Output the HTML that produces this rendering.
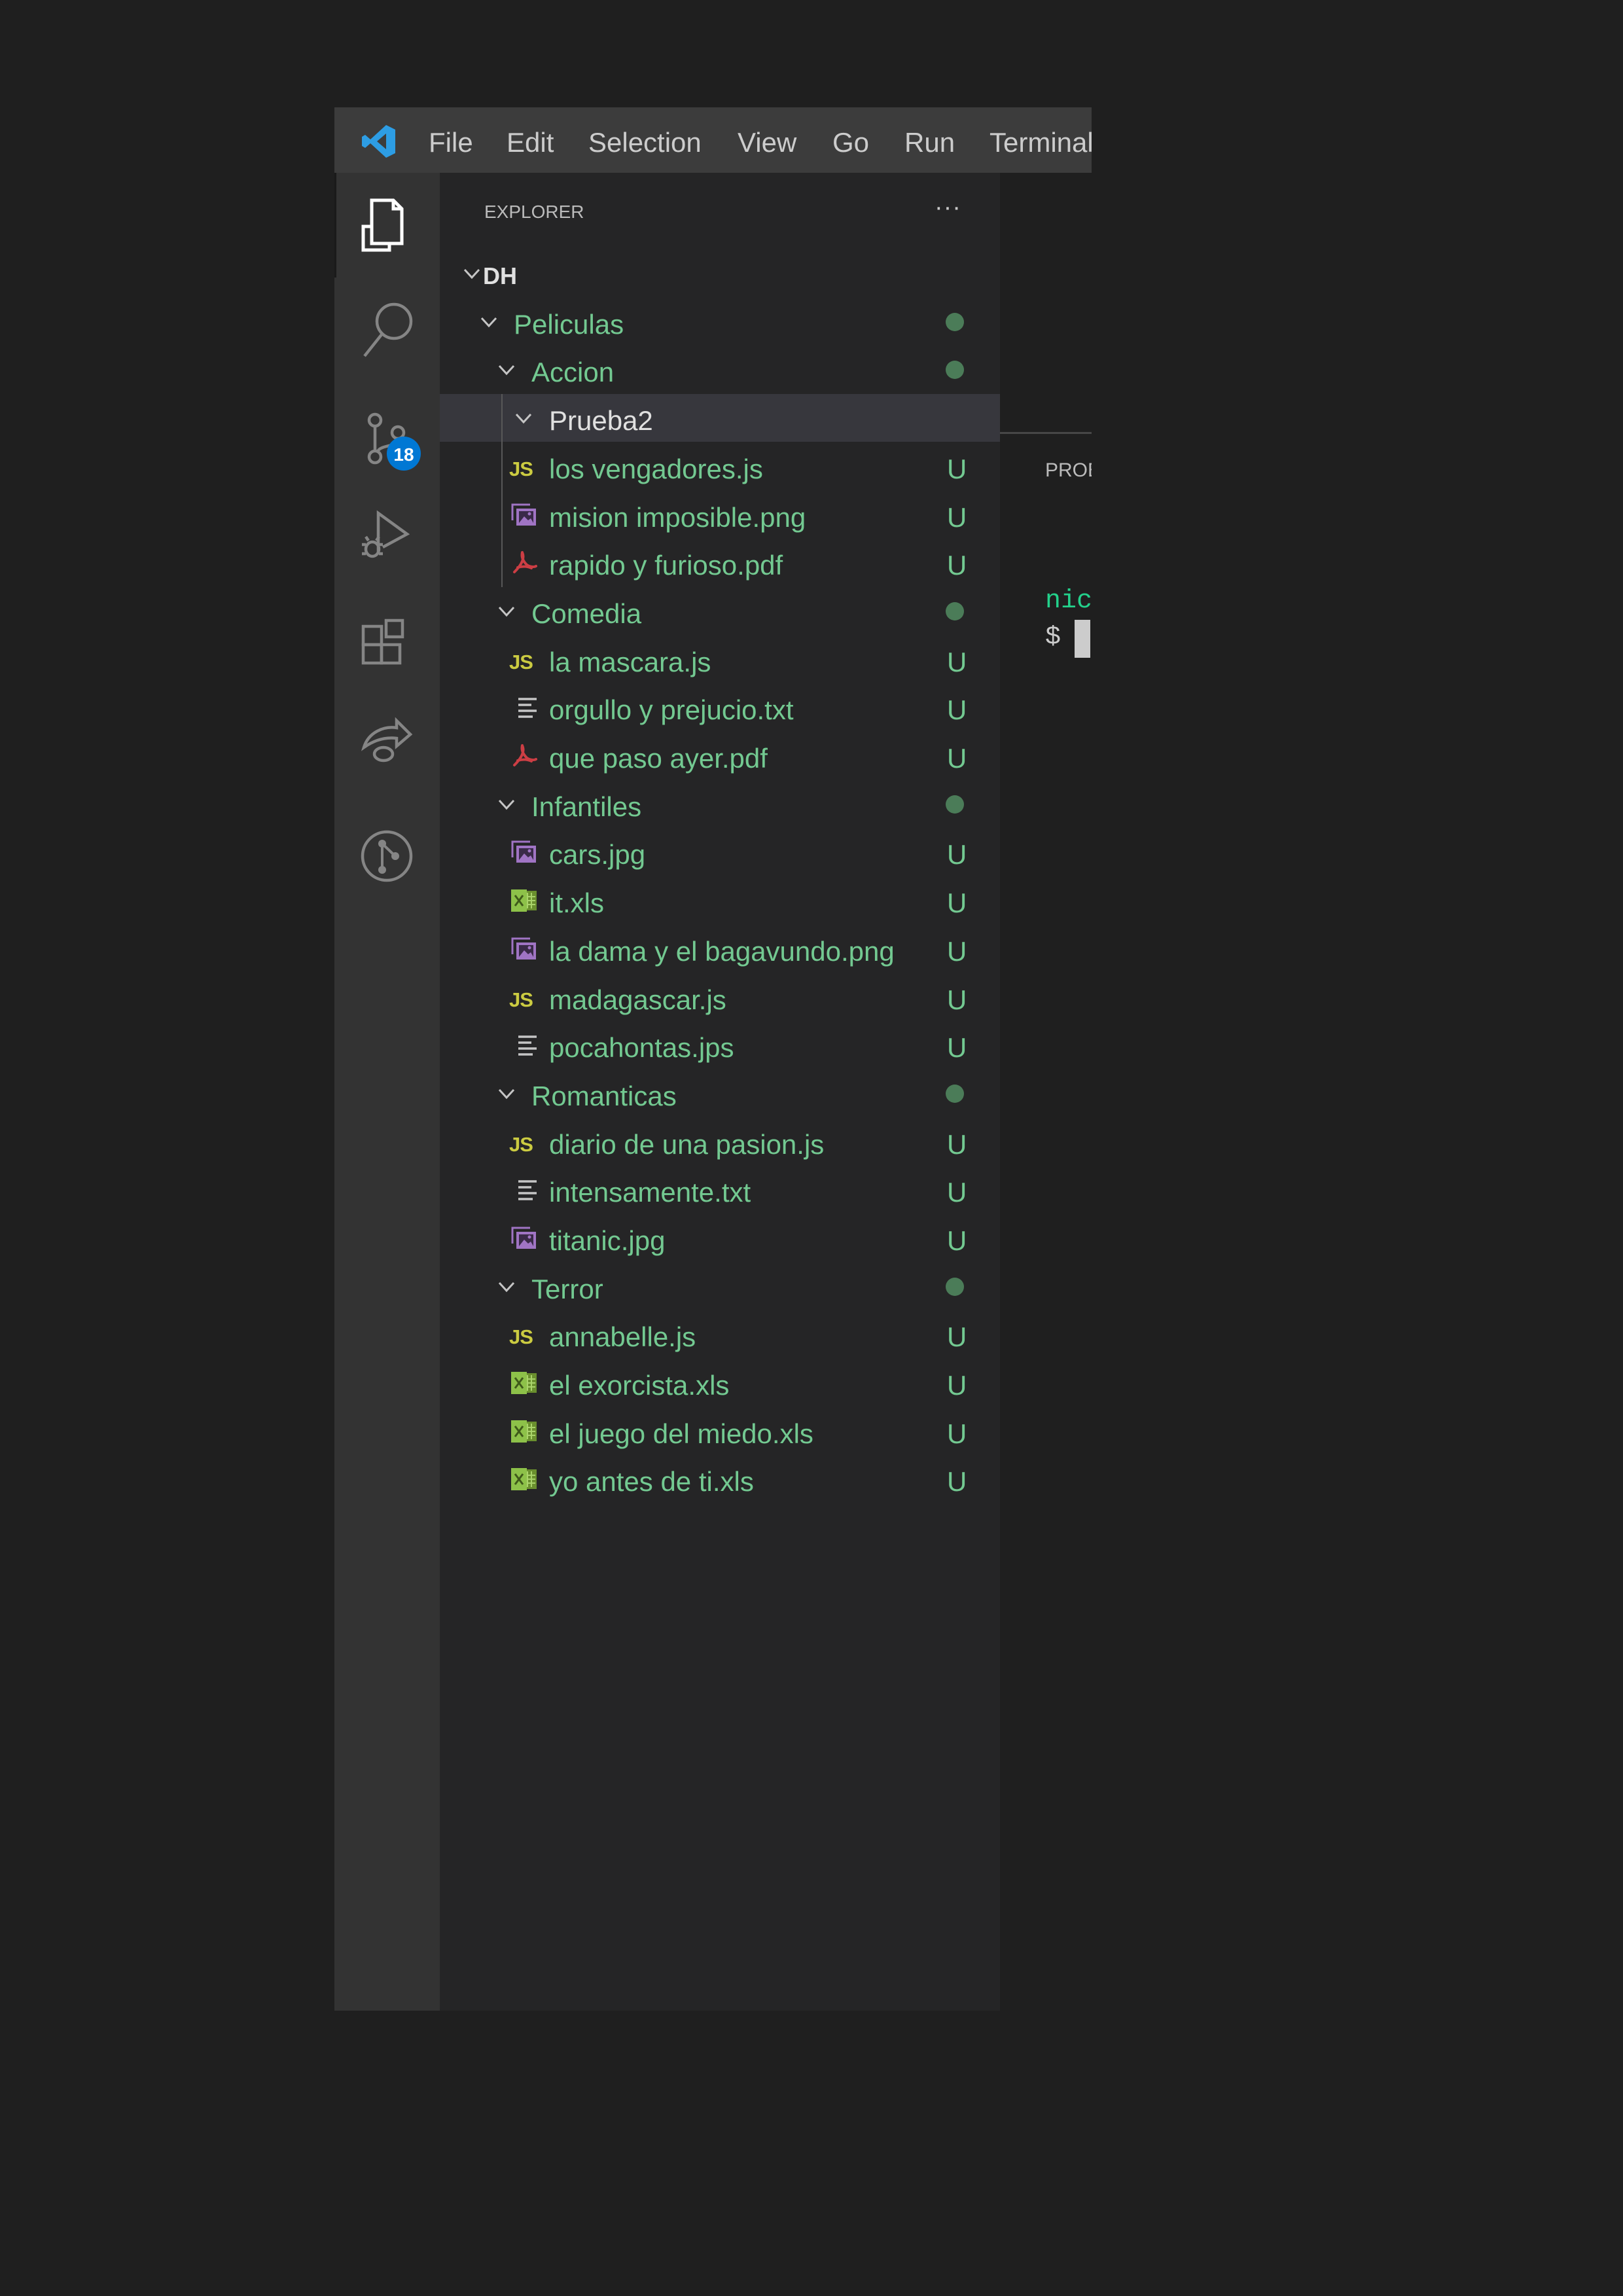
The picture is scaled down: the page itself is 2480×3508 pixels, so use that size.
<!DOCTYPE html>
<html><head><meta charset="utf-8"><style>
body{margin:0;width:2480px;height:3508px;background:#1f1f1f;position:relative;overflow:hidden;font-family:"Liberation Sans",sans-serif}
.a{position:absolute}
.r{position:absolute;left:672px;width:856px;height:74px;line-height:82px;font-size:42px;color:#73c991;white-space:nowrap}
.r span{position:absolute}
.u{left:775px}
.dot{position:absolute;left:773px;top:23px;width:28px;height:28px;border-radius:50%;background:#4b7c58}
.ch{position:absolute;top:24px;width:28px;height:26px}
.ic{position:absolute;left:106px;top:15px;width:46px;height:44px}
.js{position:absolute;left:106px;font-weight:bold;font-size:31px;color:#cbcb41;letter-spacing:-1px}
</style></head><body>
<svg width="0" height="0" style="position:absolute">
<defs>
<symbol id="chev" viewBox="0 0 28 26"><polyline points="3,7 14,19 25,7" fill="none" stroke="#c5c5c5" stroke-width="3"/></symbol>
<symbol id="img" viewBox="0 0 46 44"><path d="M5 30V6H32" fill="none" stroke="#a074c4" stroke-width="3"/><rect x="11" y="12" width="30" height="26" fill="#a074c4"/><rect x="15" y="16" width="22" height="18" fill="#3a2a48"/><path d="M15 34L23 24L29 30L33 27L37 34Z" fill="#a074c4"/><circle cx="31" cy="20" r="2.5" fill="#a074c4"/></symbol>
<symbol id="pdf" viewBox="0 0 46 44"><path d="M20 6C18 14 22 20 27 25C31 28 38 29 41 27M20 6C24 14 20 24 8 36M13 29C20 27 28 27 34 30" fill="none" stroke="#cc3e44" stroke-width="4" stroke-linecap="round"/></symbol>
<symbol id="txt" viewBox="0 0 46 44"><g stroke="#c5c5c5" stroke-width="3.5"><line x1="14" y1="9" x2="42" y2="9"/><line x1="14" y1="18" x2="34" y2="18"/><line x1="14" y1="27" x2="42" y2="27"/><line x1="14" y1="36" x2="36" y2="36"/></g></symbol>
<symbol id="xls" viewBox="0 0 46 44"><rect x="18" y="7" width="24" height="30" fill="#6a8f2e"/><g stroke="#a9d36a" stroke-width="2"><line x1="28" y1="10" x2="28" y2="34"/><line x1="34" y1="10" x2="34" y2="34"/><line x1="24" y1="16" x2="40" y2="16"/><line x1="24" y1="22" x2="40" y2="22"/><line x1="24" y1="28" x2="40" y2="28"/></g><rect x="3" y="5" width="24" height="34" fill="#8dc149"/><path d="M9 14L21 30M21 14L9 30" stroke="#3f5a1a" stroke-width="3"/></symbol>
</defs></svg>

<div class="a" style="left:511px;top:164px;width:1157px;height:100px;background:#3c3c3c;overflow:hidden">
<svg class="a" style="left:41px;top:25px" width="54" height="54" viewBox="0 0 54 54"><path d="M38 2L52 9V45L38 52L14 30L6 37L1 34V20L6 17L14 24Z M38 15L24 27L38 39Z" fill="#2d9de4" fill-rule="evenodd"/></svg>
<div class="a" style="top:30px;left:144px;font-size:42px;color:#cccccc;white-space:nowrap">File</div>
<div class="a" style="top:30px;left:263px;font-size:42px;color:#cccccc">Edit</div>
<div class="a" style="top:30px;left:388px;font-size:42px;color:#cccccc">Selection</div>
<div class="a" style="top:30px;left:616px;font-size:42px;color:#cccccc">View</div>
<div class="a" style="top:30px;left:761px;font-size:42px;color:#cccccc">Go</div>
<div class="a" style="top:30px;left:871px;font-size:42px;color:#cccccc">Run</div>
<div class="a" style="top:30px;left:1001px;font-size:42px;color:#cccccc;white-space:nowrap">Terminal</div>
</div>

<div class="a" style="left:511px;top:264px;width:161px;height:2808px;background:#333333"></div>
<div class="a" style="left:511px;top:264px;width:3px;height:160px;background:#1a1a1a"></div>
<svg class="a" style="left:511px;top:264px" width="161" height="1150" viewBox="0 0 161 1150">
<g fill="none" stroke="#ffffff" stroke-width="5">
<path d="M57 82H44V118H84V108"/><path d="M57 108V42H90L103 55V108Z"/><path d="M90 42V55H103"/>
</g>
<g fill="none" stroke="#858585" stroke-width="4.5">
<circle cx="91" cy="227" r="26"/><line x1="73" y1="246" x2="46" y2="280"/>
<circle cx="62" cy="378" r="9"/><circle cx="97" cy="397" r="9"/><circle cx="62" cy="434" r="9"/>
<line x1="62" y1="387" x2="62" y2="425"/><path d="M97 406C97 420 70 415 66 426"/>
<path d="M67 580V520L111 552L74 572"/><ellipse cx="58" cy="575" rx="10" ry="11"/><path d="M42 568H48M42 582H48M68 568H74M68 582H74M52 562L48 556M64 562L68 556"/>
<rect x="44" y="693" width="28" height="28"/><rect x="44" y="721" width="28" height="28"/><rect x="72" y="721" width="28" height="28"/><rect x="79" y="684" width="25" height="25"/>
<path d="M45 878C52 855 75 845 95 848V837L116 858L95 876V864C78 862 62 866 45 878Z"/><ellipse cx="75" cy="888" rx="14" ry="10"/>
<circle cx="80" cy="1044" r="37"/>
</g>
<g fill="#858585"><circle cx="73" cy="1025" r="6"/><circle cx="93" cy="1044" r="6"/><circle cx="73" cy="1065" r="6"/></g>
<path d="M73 1025V1065M73 1025L93 1044" stroke="#858585" stroke-width="4"/>
<circle cx="106" cy="429" r="26" fill="#0078d4"/>
<text x="106" y="440" font-family="Liberation Sans" font-size="28" font-weight="bold" fill="#fff" text-anchor="middle">18</text>
</svg>

<div class="a" style="left:672px;top:264px;width:856px;height:2808px;background:#252526"></div>
<div class="a" style="left:740px;top:308px;font-size:28px;color:#bbbbbb">EXPLORER</div>
<div class="a" style="left:1428px;top:296px;font-size:38px;color:#cccccc;letter-spacing:1px">···</div>
<div class="a" style="left:672px;top:602px;width:856px;height:73px;background:#37373d"></div>
<div class="a" style="left:766px;top:602px;width:2px;height:295px;background:#585858"></div>

<div class="r" style="top:381px;color:#e0e0e0;font-weight:bold;font-size:36px"><svg class="ch" style="left:35px"><use href="#chev"/></svg><span style="left:66px">DH</span></div>
<div class="r" style="top:455px"><svg class="ch" style="left:61px"><use href="#chev"/></svg><span style="left:113px">Peliculas</span><i class="dot"></i></div>
<div class="r" style="top:528px"><svg class="ch" style="left:88px"><use href="#chev"/></svg><span style="left:140px">Accion</span><i class="dot"></i></div>
<div class="r" style="top:602px;color:#e0e0e0"><svg class="ch" style="left:114px"><use href="#chev"/></svg><span style="left:167px">Prueba2</span></div>
<div class="r" style="top:676px"><span class="js">JS</span><span style="left:167px">los vengadores.js</span><span class="u">U</span></div>
<div class="r" style="top:750px"><svg class="ic"><use href="#img"/></svg><span style="left:167px">mision imposible.png</span><span class="u">U</span></div>
<div class="r" style="top:823px"><svg class="ic"><use href="#pdf"/></svg><span style="left:167px">rapido y furioso.pdf</span><span class="u">U</span></div>
<div class="r" style="top:897px"><svg class="ch" style="left:88px"><use href="#chev"/></svg><span style="left:140px">Comedia</span><i class="dot"></i></div>
<div class="r" style="top:971px"><span class="js">JS</span><span style="left:167px">la mascara.js</span><span class="u">U</span></div>
<div class="r" style="top:1044px"><svg class="ic"><use href="#txt"/></svg><span style="left:167px">orgullo y prejucio.txt</span><span class="u">U</span></div>
<div class="r" style="top:1118px"><svg class="ic"><use href="#pdf"/></svg><span style="left:167px">que paso ayer.pdf</span><span class="u">U</span></div>
<div class="r" style="top:1192px"><svg class="ch" style="left:88px"><use href="#chev"/></svg><span style="left:140px">Infantiles</span><i class="dot"></i></div>
<div class="r" style="top:1265px"><svg class="ic"><use href="#img"/></svg><span style="left:167px">cars.jpg</span><span class="u">U</span></div>
<div class="r" style="top:1339px"><svg class="ic"><use href="#xls"/></svg><span style="left:167px">it.xls</span><span class="u">U</span></div>
<div class="r" style="top:1413px"><svg class="ic"><use href="#img"/></svg><span style="left:167px">la dama y el bagavundo.png</span><span class="u">U</span></div>
<div class="r" style="top:1487px"><span class="js">JS</span><span style="left:167px">madagascar.js</span><span class="u">U</span></div>
<div class="r" style="top:1560px"><svg class="ic"><use href="#txt"/></svg><span style="left:167px">pocahontas.jps</span><span class="u">U</span></div>
<div class="r" style="top:1634px"><svg class="ch" style="left:88px"><use href="#chev"/></svg><span style="left:140px">Romanticas</span><i class="dot"></i></div>
<div class="r" style="top:1708px"><span class="js">JS</span><span style="left:167px">diario de una pasion.js</span><span class="u">U</span></div>
<div class="r" style="top:1781px"><svg class="ic"><use href="#txt"/></svg><span style="left:167px">intensamente.txt</span><span class="u">U</span></div>
<div class="r" style="top:1855px"><svg class="ic"><use href="#img"/></svg><span style="left:167px">titanic.jpg</span><span class="u">U</span></div>
<div class="r" style="top:1929px"><svg class="ch" style="left:88px"><use href="#chev"/></svg><span style="left:140px">Terror</span><i class="dot"></i></div>
<div class="r" style="top:2002px"><span class="js">JS</span><span style="left:167px">annabelle.js</span><span class="u">U</span></div>
<div class="r" style="top:2076px"><svg class="ic"><use href="#xls"/></svg><span style="left:167px">el exorcista.xls</span><span class="u">U</span></div>
<div class="r" style="top:2150px"><svg class="ic"><use href="#xls"/></svg><span style="left:167px">el juego del miedo.xls</span><span class="u">U</span></div>
<div class="r" style="top:2223px"><svg class="ic"><use href="#xls"/></svg><span style="left:167px">yo antes de ti.xls</span><span class="u">U</span></div>

<div class="a" style="left:1528px;top:660px;width:140px;height:3px;background:#474747"></div>
<div class="a" style="left:1528px;top:690px;width:140px;height:60px;overflow:hidden"><div style="position:absolute;left:69px;top:12px;font-size:30px;color:#bbbbbb">PROBLEMS</div></div>
<div class="a" style="left:1528px;top:890px;width:140px;height:120px;overflow:hidden;font-family:'Liberation Mono',monospace;font-size:40px">
<div style="position:absolute;left:69px;top:6px;color:#23d18b">nico</div>
<div style="position:absolute;left:69px;top:62px;color:#cccccc">$</div>
<div style="position:absolute;left:114px;top:57px;width:24px;height:58px;background:#cccccc"></div>
</div>
</body></html>
